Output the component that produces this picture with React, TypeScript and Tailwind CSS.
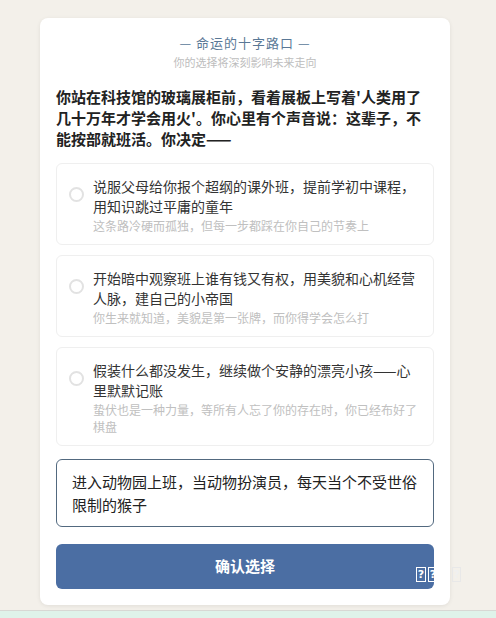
import { useEffect, useRef, useState } from 'react';

const options = [
  {
    title: '说服父母给你报个超纲的课外班，提前学初中课程，用知识跳过平庸的童年',
    hint: '这条路冷硬而孤独，但每一步都踩在你自己的节奏上',
  },
  {
    title: '开始暗中观察班上谁有钱又有权，用美貌和心机经营人脉，建自己的小帝国',
    hint: '你生来就知道，美貌是第一张牌，而你得学会怎么打',
  },
  {
    title: '假装什么都没发生，继续做个安静的漂亮小孩——心里默默记账',
    hint: '蛰伏也是一种力量，等所有人忘了你的存在时，你已经布好了棋盘',
  },
];

export default function App() {
  const [custom, setCustom] = useState('进入动物园上班，当动物扮演员，每天当个不受世俗限制的猴子');
  const inputRef = useRef<HTMLTextAreaElement>(null);

  // keep the caret at the end of the typed answer
  useEffect(() => {
    const el = inputRef.current;
    if (el) {
      el.focus();
      el.setSelectionRange(el.value.length, el.value.length);
    }
  }, []);

  return (
    <div
      className="relative h-[618px] w-[496px] overflow-hidden bg-[#f3f0ea]"
      style={{ fontFamily: '"Noto Sans CJK SC", "Noto Sans", sans-serif' }}
    >
      <div className="pt-[18px] pl-10">
        {/* Card */}
        <div className="w-[410px] rounded-lg bg-white px-4 pt-4 pb-4 shadow-[0_1px_4px_rgba(0,0,0,0.08)]">
          {/* Header */}
          <div className="text-center text-[13px] leading-[18px] tracking-[1px] text-[#5a7896]">— 命运的十字路口 —</div>
          <div className="mt-0.5 text-center text-[11px] leading-4 text-[#bdbdbd]">你的选择将深刻影响未来走向</div>

          {/* Question */}
          <p className="mt-4 text-[15px] font-bold leading-[21px] text-[#222]">
            你站在科技馆的玻璃展柜前，看着展板上写着'人类用了几十万年才学会用火'。你心里有个声音说：这辈子，不能按部就班活。你决定——
          </p>

          {/* Options */}
          <div className="mt-[14px] flex flex-col gap-2.5">
            {options.map((o) => (
              <div key={o.title} className="flex items-start gap-[9px] rounded-md border border-[#efefef] pl-3 pr-3 pt-3 pb-2.5">
                <span className="mt-[11px] h-[15px] w-[15px] shrink-0 rounded-full border-2 border-[#e2e2e2]" />
                <div>
                  <div className="text-sm leading-5 text-[#333]">{o.title}</div>
                  <div className="mt-px text-xs leading-[17px] text-[#c0c0c0]">{o.hint}</div>
                </div>
              </div>
            ))}
          </div>

          {/* Custom answer */}
          <textarea
            ref={inputRef}
            value={custom}
            onChange={(e) => setCustom(e.target.value)}
            rows={2}
            className="mt-[13px] block h-[68px] w-full resize-none rounded-md border border-[#52697f] px-[15px] py-2.5 text-[15px] leading-[23px] text-[#222] caret-black outline-none"
          />

          {/* Confirm */}
          <button className="mt-[17px] flex h-[45px] w-full items-center justify-center rounded-md bg-[#4b6ea3] text-[15px] font-bold text-white">
            确认选择
          </button>
        </div>
      </div>

      {/* Missing glyph overlay */}
      <div className="absolute left-[416px] top-[567px] flex gap-0.5 text-[11px] font-bold leading-[13px] text-white" style={{ fontFamily: '"DejaVu Sans", sans-serif' }}>
        <span className="h-[15px] w-[10px] border border-white text-center">?</span>
        <span className="h-[15px] w-[10px] border border-white text-center">?</span>
        <span className="ml-3 h-[15px] w-[9px] border border-[#e8e8e8] text-center text-[#f0f0f0]">?</span>
      </div>

      {/* Bottom strip */}
      <div className="absolute bottom-0 left-0 right-0 h-[8px] border-t border-[#d8d8d4] bg-[#dff3ea]" />
    </div>
  );
}
